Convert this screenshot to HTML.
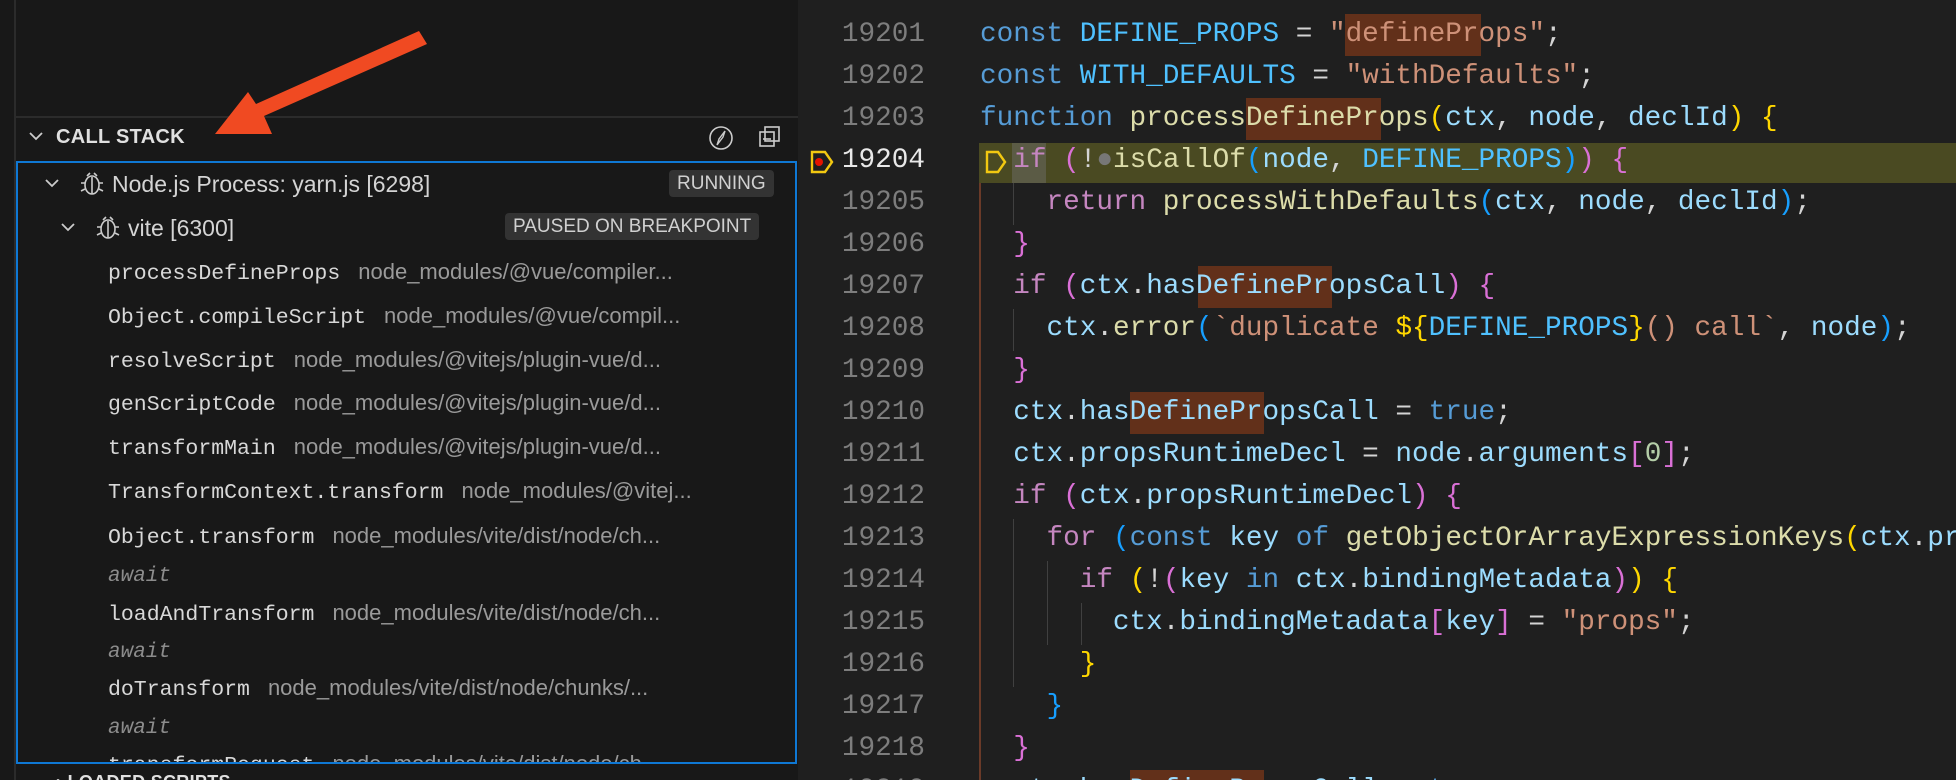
<!DOCTYPE html>
<html><head><meta charset="utf-8"><style>
*{margin:0;padding:0;box-sizing:border-box}
body{width:1956px;height:780px;overflow:hidden;background:#1f1f1f;position:relative;font-family:"Liberation Sans",sans-serif}
#left{position:absolute;left:0;top:0;width:798px;height:780px;background:#181818;overflow:hidden}
#left .vline{position:absolute;left:14px;top:0;width:2px;height:780px;background:#2b2b2b}
#left .sep{position:absolute;left:15px;top:116px;width:783px;height:2px;background:#2b2b2b}
.hdr{position:absolute;left:56px;top:126px;font-weight:bold;font-size:20px;color:#e0e0e0;letter-spacing:.3px}
.box{position:absolute;left:16px;top:161px;width:781px;height:603px;border:2px solid #0f78d4;overflow:hidden}
.row{position:absolute;left:0;height:40px;line-height:40px;white-space:nowrap;font-size:23px;color:#d4d4d4}
.fn{font-family:"Liberation Mono",monospace;font-size:21.5px;color:#d8d8d8}
.path{color:#9a9a9a;margin-left:18px;font-size:22px}
.aw{font-family:"Liberation Mono",monospace;font-style:italic;color:#8c8c8c;font-size:21px}
.badge{position:absolute;background:#333;color:#d0d0d0;font-size:19px;border-radius:4px;padding:0 8px;height:27px;line-height:27px}
#ed{position:absolute;left:798px;top:0;right:0;height:780px;background:#1f1f1f;overflow:hidden}
.ln{position:absolute;left:0;width:127px;text-align:right;font-family:"Liberation Mono",monospace;font-size:27.7px;color:#7d7d7d;height:42px;line-height:42px}
.cl{position:absolute;left:182px;white-space:pre;font-family:"Liberation Mono",monospace;font-size:27.7px;color:#d4d4d4;height:42px;line-height:42px}
.k{color:#569cd6}.c{color:#c586c0}.f{color:#dcdcaa}.v{color:#9cdcfe}.n{color:#4fc1ff}.s{color:#ce9178}.g{color:#b5cea8}
.b1{color:#ffd700}.b2{color:#da70d6}.b3{color:#179fff}
.hl{position:absolute;background:#62301a;height:42px}
.guide{position:absolute;width:1px;background:#404040}
</style></head><body>
<div id="left">
<div class="vline"></div><div class="sep"></div>
<svg style="position:absolute;left:0;top:0" width="798" height="160">
<polygon points="419,31 427,44 264,116 272,134 215,134 248,92 256,104" fill="#f04a22"/>
<polyline points="30,133 36,139 42,133" fill="none" stroke="#ccc" stroke-width="1.8"/>
<circle cx="721" cy="138" r="11" fill="none" stroke="#ccc" stroke-width="1.6"/>
<path d="M725 131 L719 139 L717 145 L723 137 Z" fill="none" stroke="#ccc" stroke-width="1.4"/>
<rect x="760" y="132" width="14" height="14" fill="#181818" stroke="#ccc" stroke-width="1.6"/>
<rect x="765" y="127" width="14" height="14" fill="none" stroke="#ccc" stroke-width="1.6"/>
<line x1="763" y1="139" x2="771" y2="139" stroke="#ccc" stroke-width="1.6"/>
</svg>
<div class="hdr">CALL STACK</div>
<div class="box">
<svg style="position:absolute;left:0;top:0" width="140" height="80">
<polyline points="28,17 34,23 40,17" fill="none" stroke="#ccc" stroke-width="1.8"/>
<g fill="none" stroke="#ccc" stroke-width="1.6"><ellipse cx="74" cy="22" rx="7" ry="9"/><path d="M69 13 L72 10 M79 13 L76 10 M63 20 H67 M81 20 H85 M63 28 L67 26 M85 28 L81 26 M74 14 V31"/></g>
<polyline points="44,61 50,67 56,61" fill="none" stroke="#ccc" stroke-width="1.8"/>
<g fill="none" stroke="#ccc" stroke-width="1.6"><ellipse cx="90" cy="66" rx="7" ry="9"/><path d="M85 57 L88 54 M95 57 L92 54 M79 64 H83 M97 64 H101 M79 72 L83 70 M101 72 L97 70 M90 58 V75"/></g>
</svg>
<div class="row" style="left:94px;top:1px">Node.js Process: yarn.js [6298]</div>
<div class="badge" style="left:651px;top:7px">RUNNING</div>
<div class="row" style="left:110px;top:45px">vite [6300]</div>
<div class="badge" style="left:487px;top:50px">PAUSED ON BREAKPOINT</div>
<div class="row" style="left:90px;top:88px"><span class="fn">processDefineProps</span><span class="path">node_modules/@vue/compiler...</span></div>
<div class="row" style="left:90px;top:132px"><span class="fn">Object.compileScript</span><span class="path">node_modules/@vue/compil...</span></div>
<div class="row" style="left:90px;top:176px"><span class="fn">resolveScript</span><span class="path">node_modules/@vitejs/plugin-vue/d...</span></div>
<div class="row" style="left:90px;top:219px"><span class="fn">genScriptCode</span><span class="path">node_modules/@vitejs/plugin-vue/d...</span></div>
<div class="row" style="left:90px;top:263px"><span class="fn">transformMain</span><span class="path">node_modules/@vitejs/plugin-vue/d...</span></div>
<div class="row" style="left:90px;top:307px"><span class="fn">TransformContext.transform</span><span class="path">node_modules/@vitej...</span></div>
<div class="row" style="left:90px;top:352px"><span class="fn">Object.transform</span><span class="path">node_modules/vite/dist/node/ch...</span></div>
<div class="row" style="left:90px;top:390px"><span class="aw">await</span></div>
<div class="row" style="left:90px;top:429px"><span class="fn">loadAndTransform</span><span class="path">node_modules/vite/dist/node/ch...</span></div>
<div class="row" style="left:90px;top:466px"><span class="aw">await</span></div>
<div class="row" style="left:90px;top:504px"><span class="fn">doTransform</span><span class="path">node_modules/vite/dist/node/chunks/...</span></div>
<div class="row" style="left:90px;top:542px"><span class="aw">await</span></div>
<div class="row" style="left:90px;top:580px"><span class="fn">transformRequest</span><span class="path">node_modules/vite/dist/node/ch...</span></div>
</div>
<div class="hdr" style="top:772px;font-size:18px">›  LOADED SCRIPTS</div>
</div>

<div id="ed">
<div style="position:absolute;left:181px;top:143px;right:0;height:40px;background:#4a4a22"></div>
<div style="position:absolute;left:214px;top:143px;width:34px;height:40px;background:#5b5b45"></div>
<div class="hl" style="left:547px;top:14px;width:136px"></div>
<div class="hl" style="left:448px;top:98px;width:135px"></div>
<div class="hl" style="left:400px;top:266px;width:134px"></div>
<div class="hl" style="left:332px;top:392px;width:134px"></div>
<div class="hl" style="left:332px;top:770px;width:134px"></div>
<div class="guide" style="left:181px;top:183px;height:600px;background:#6a3a28;width:2px"></div>
<div class="guide" style="left:215px;top:183px;height:42px"></div>
<div class="guide" style="left:215px;top:309px;height:42px"></div>
<div class="guide" style="left:215px;top:519px;height:168px"></div>
<div class="guide" style="left:249px;top:561px;height:84px"></div>
<div class="guide" style="left:283px;top:603px;height:42px"></div>
<svg style="position:absolute;left:0;top:140px" width="220" height="46">
<path d="M14 12 H27 L34 22 L27 32 H14 Z" fill="none" stroke="#f2c811" stroke-width="2.4"/><circle cx="21" cy="22" r="4" fill="#e51400"/>
<path d="M189 12 H200 L207 22 L200 32 H189 Z" fill="none" stroke="#f2c811" stroke-width="2.4"/>
</svg>
<div class="ln" style="top:-28px">19200</div><div class="ln" style="top:14px">19201</div><div class="ln" style="top:56px">19202</div><div class="ln" style="top:98px">19203</div><div class="ln" style="top:140px;color:#e8e8e8">19204</div><div class="ln" style="top:182px">19205</div><div class="ln" style="top:224px">19206</div><div class="ln" style="top:266px">19207</div><div class="ln" style="top:308px">19208</div><div class="ln" style="top:350px">19209</div><div class="ln" style="top:392px">19210</div><div class="ln" style="top:434px">19211</div><div class="ln" style="top:476px">19212</div><div class="ln" style="top:518px">19213</div><div class="ln" style="top:560px">19214</div><div class="ln" style="top:602px">19215</div><div class="ln" style="top:644px">19216</div><div class="ln" style="top:686px">19217</div><div class="ln" style="top:728px">19218</div><div class="ln" style="top:770px">19219</div>

<div class="cl" style="top:14px"><span class="k">const</span> <span class="n">DEFINE_PROPS</span> = <span class="s">"defineProps"</span>;</div>
<div class="cl" style="top:56px"><span class="k">const</span> <span class="n">WITH_DEFAULTS</span> = <span class="s">"withDefaults"</span>;</div>
<div class="cl" style="top:98px"><span class="k">function</span> <span class="f">processDefineProps</span><span class="b1">(</span><span class="v">ctx</span>, <span class="v">node</span>, <span class="v">declId</span><span class="b1">)</span> <span class="b1">{</span></div>
<div class="cl" style="top:140px">  <span class="c">if</span> <span class="b2">(</span>!<span style="color:#777">●</span><span class="f">isCallOf</span><span class="b3">(</span><span class="v">node</span>, <span class="n">DEFINE_PROPS</span><span class="b3">)</span><span class="b2">)</span> <span class="b2">{</span></div>
<div class="cl" style="top:182px">    <span class="c">return</span> <span class="f">processWithDefaults</span><span class="b3">(</span><span class="v">ctx</span>, <span class="v">node</span>, <span class="v">declId</span><span class="b3">)</span>;</div>
<div class="cl" style="top:224px">  <span class="b2">}</span></div>
<div class="cl" style="top:266px">  <span class="c">if</span> <span class="b2">(</span><span class="v">ctx</span>.<span class="v">hasDefinePropsCall</span><span class="b2">)</span> <span class="b2">{</span></div>
<div class="cl" style="top:308px">    <span class="v">ctx</span>.<span class="f">error</span><span class="b3">(</span><span class="s">`duplicate </span><span class="b1">${</span><span class="n">DEFINE_PROPS</span><span class="b1">}</span><span class="s">() call`</span>, <span class="v">node</span><span class="b3">)</span>;</div>
<div class="cl" style="top:350px">  <span class="b2">}</span></div>
<div class="cl" style="top:392px">  <span class="v">ctx</span>.<span class="v">hasDefinePropsCall</span> = <span class="k">true</span>;</div>
<div class="cl" style="top:434px">  <span class="v">ctx</span>.<span class="v">propsRuntimeDecl</span> = <span class="v">node</span>.<span class="v">arguments</span><span class="b2">[</span><span class="g">0</span><span class="b2">]</span>;</div>
<div class="cl" style="top:476px">  <span class="c">if</span> <span class="b2">(</span><span class="v">ctx</span>.<span class="v">propsRuntimeDecl</span><span class="b2">)</span> <span class="b2">{</span></div>
<div class="cl" style="top:518px">    <span class="c">for</span> <span class="b3">(</span><span class="k">const</span> <span class="v">key</span> <span class="k">of</span> <span class="f">getObjectOrArrayExpressionKeys</span><span class="b1">(</span><span class="v">ctx</span>.<span class="v">propsRuntimeDecl</span><span class="b1">)</span><span class="b3">)</span> <span class="b3">{</span></div>
<div class="cl" style="top:560px">      <span class="c">if</span> <span class="b1">(</span>!<span class="b2">(</span><span class="v">key</span> <span class="k">in</span> <span class="v">ctx</span>.<span class="v">bindingMetadata</span><span class="b2">)</span><span class="b1">)</span> <span class="b1">{</span></div>
<div class="cl" style="top:602px">        <span class="v">ctx</span>.<span class="v">bindingMetadata</span><span class="b2">[</span><span class="v">key</span><span class="b2">]</span> = <span class="s">"props"</span>;</div>
<div class="cl" style="top:644px">      <span class="b1">}</span></div>
<div class="cl" style="top:686px">    <span class="b3">}</span></div>
<div class="cl" style="top:728px">  <span class="b2">}</span></div>
<div class="cl" style="top:770px">  <span class="v">ctx</span>.<span class="v">hasDefinePropsCall</span> = <span class="k">true</span>;</div>
</div>
</body></html>
